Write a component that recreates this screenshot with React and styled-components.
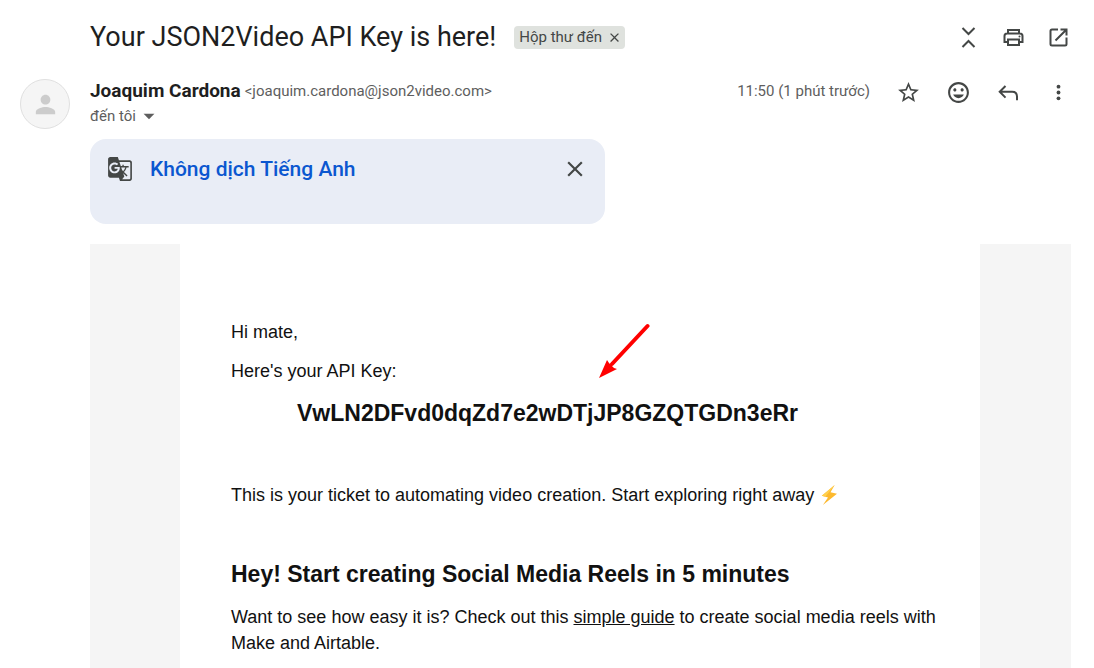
import React from 'react'
import styled, { createGlobalStyle } from 'styled-components'
import {
  MdArrowDropDown,
  MdClose,
  MdGTranslate,
  MdOutlineMood,
  MdPerson,
  MdStarBorder,
} from 'react-icons/md'

const GlobalStyle = createGlobalStyle`
  * {
    box-sizing: border-box;
  }

  body {
    margin: 0;
    background: #ffffff;
    color: #1f1f1f;
    font-family: Roboto, 'Noto Sans', sans-serif;
  }
`

const Page = styled.main`
  display: flex;
  flex-direction: column;
  min-height: 100vh;
  padding: 16px 23px 0 20px;
`

const SubjectRow = styled.header`
  display: flex;
  align-items: center;
  height: 42px;
  padding-left: 70px;
`

const Subject = styled.h1`
  margin: 0;
  font-size: 27px;
  font-weight: 400;
  line-height: 36px;
`

const Label = styled.span`
  display: flex;
  align-items: center;
  gap: 5px;
  height: 23px;
  margin-left: 18px;
  padding: 0 3px 0 5px;
  border-radius: 4px;
  background: #dfe2de;
  color: #444746;
  font-size: 15px;
  line-height: 23px;
`

const Toolbar = styled.div`
  display: flex;
  gap: ${({ $gap }) => $gap}px;
`

const SubjectTools = styled(Toolbar)`
  margin-left: auto;
`

const IconButton = styled.button`
  display: flex;
  align-items: center;
  justify-content: center;
  width: ${({ $size }) => $size || 25}px;
  height: ${({ $size }) => $size || 25}px;
  padding: 0;
  border: 0;
  background: none;
  color: #444746;
  font-size: ${({ $size }) => $size || 25}px;
  cursor: pointer;
`

const Message = styled.article`
  display: flex;
  flex: 1;
  gap: 20px;
  margin-top: 21px;
`

const Avatar = styled.div`
  display: flex;
  flex: none;
  align-items: center;
  justify-content: center;
  width: 50px;
  height: 50px;
  border: 1px solid #e0e0e0;
  border-radius: 50%;
  background: #f5f5f5;
  color: #cccccc;
  font-size: 29px;
`

const Column = styled.div`
  display: flex;
  flex: 1;
  flex-direction: column;
  min-width: 0;
`

const SenderRow = styled.div`
  display: flex;
  align-items: flex-start;
  height: 24px;
  line-height: 24px;
`

const SenderName = styled.h2`
  margin: 0 4px 0 0;
  font-size: 19px;
  font-weight: 700;
`

const Address = styled.span`
  color: #5e5e5e;
  font-size: 15px;
`

const Time = styled.time`
  margin-left: auto;
  margin-right: 26px;
  color: #5e5e5e;
  font-size: 15px;
`

const MessageTools = styled(Toolbar)`
  margin-top: 1px;
`

const RecipientButton = styled.button`
  display: flex;
  align-items: center;
  align-self: flex-start;
  height: 25px;
  padding: 0;
  border: 0;
  background: none;
  color: #5e5e5e;
  font-family: inherit;
  font-size: 15px;
  cursor: pointer;

  svg {
    font-size: 26px;
  }
`

const TranslateBar = styled.section`
  display: flex;
  align-items: flex-start;
  width: 515px;
  max-width: 100%;
  height: 85px;
  margin-top: 11px;
  padding: 17px 17px 0;
  border-radius: 16px;
  background: #e9edf6;
  color: #444746;
`

const TranslateLink = styled.a`
  margin: 0 auto 0 17px;
  color: #0b57d0;
  font-size: 21px;
  font-weight: 500;
  line-height: 26px;
  text-decoration: none;
`

const MailBody = styled.div`
  flex: 1;
  margin-top: 20px;
  padding: 0 91px 0 90px;
  background: #f5f5f5;
`

const Sheet = styled.div`
  height: 100%;
  padding: 75px 40px 12px 51px;
  background: #ffffff;
  color: #111111;
  font-family: 'Liberation Sans', Arial, sans-serif;
`

const Paragraph = styled.p`
  margin: 0 0 13px;
  font-size: 18px;
  line-height: 26px;

  a {
    color: inherit;
  }
`

const ApiKey = styled.p`
  position: relative;
  width: fit-content;
  margin: 0 0 53px 66px;
  font-size: 23px;
  font-weight: 700;
  line-height: 32px;
`

const Arrow = styled.svg`
  position: absolute;
  left: 301px;
  bottom: 50px;
  width: 52px;
  height: 56px;
`

const Heading = styled.h3`
  margin: 50px 0 14px;
  font-size: 23px;
  font-weight: 700;
  line-height: 32px;
`

const BoltIcon = styled.svg`
  width: 20px;
  height: 22px;
  vertical-align: -5px;
`

const LineIcon = styled.svg.attrs({ viewBox: '0 0 25 25', fill: 'none', stroke: 'currentColor' })`
  width: 25px;
  height: 25px;
  stroke-width: ${({ $weight }) => $weight || 2}px;
`

const CollapseIcon = () => (
  <LineIcon>
    <path d="m6.500 3 6 6 6-6M6.500 22l6-6 6 6" />
  </LineIcon>
)

const PrintIcon = () => (
  <LineIcon $weight={2}>
    <path d="M7 8.500V5h11v3.500M7 17H3.500v-6q0-2.500 2.500-2.500h13q2.500 0 2.500 2.500v6H18" />
    <path d="M7 14.500h11V20H7z" />
    <circle cx="18.500" cy="11.500" r="1" fill="currentColor" stroke="none" />
  </LineIcon>
)

const OpenIcon = () => (
  <LineIcon>
    <path d="M12 4.500H6q-1.500 0-1.500 1.500v13q0 1.500 1.500 1.500h13q1.500 0 1.500-1.500v-6.500" />
    <path d="M14.500 4.500h6v6M20.500 4.500 9.500 15.500" />
  </LineIcon>
)

const ReplyIcon = () => (
  <LineIcon>
    <path d="M9.500 6 3.700 11.800l5.800 5.800M4 11.800h12.200q4.800 0 4.800 4.800v3.700" />
  </LineIcon>
)

const MoreIcon = () => (
  <LineIcon>
    <g fill="currentColor" stroke="none">
      <circle cx="12.500" cy="6.700" r="1.900" />
      <circle cx="12.500" cy="12.500" r="1.900" />
      <circle cx="12.500" cy="18.300" r="1.900" />
    </g>
  </LineIcon>
)

const Bolt = () => (
  <BoltIcon viewBox="0 0 20 22" role="img" aria-label="⚡">
    <path d="M15.700 1 2.800 11.700l6.200 1.700L3.900 21 18 9.800l-6.500-1.600z" fill="#fdb92e" />
    <path d="M15.700 1 2.800 11.700l3.500 1z" fill="#ffd04d" />
  </BoltIcon>
)

const App = () => (
  <>
    <GlobalStyle />
    <Page>
      <SubjectRow>
        <Subject>Your JSON2Video API Key is here!</Subject>
        <Label>
          Hộp thư đến
          <IconButton $size={15} aria-label="Xóa nhãn"><MdClose /></IconButton>
        </Label>
        <SubjectTools $gap={20}>
          <IconButton aria-label="Thu gọn"><CollapseIcon /></IconButton>
          <IconButton aria-label="In"><PrintIcon /></IconButton>
          <IconButton aria-label="Mở trong cửa sổ mới"><OpenIcon /></IconButton>
        </SubjectTools>
      </SubjectRow>

      <Message>
        <Avatar><MdPerson /></Avatar>
        <Column>
          <SenderRow>
            <SenderName>Joaquim Cardona</SenderName>
            <Address>&lt;joaquim.cardona@json2video.com&gt;</Address>
            <Time>11:50 (1 phút trước)</Time>
            <MessageTools $gap={25}>
              <IconButton aria-label="Gắn dấu sao"><MdStarBorder /></IconButton>
              <IconButton aria-label="Thêm biểu tượng cảm xúc"><MdOutlineMood /></IconButton>
              <IconButton aria-label="Trả lời"><ReplyIcon /></IconButton>
              <IconButton aria-label="Thêm"><MoreIcon /></IconButton>
            </MessageTools>
          </SenderRow>
          <RecipientButton>
            đến tôi
            <MdArrowDropDown />
          </RecipientButton>

          <TranslateBar>
            <MdGTranslate size={26} />
            <TranslateLink href="#translate">Không dịch Tiếng Anh</TranslateLink>
            <IconButton $size={26} aria-label="Đóng"><MdClose /></IconButton>
          </TranslateBar>

          <MailBody>
            <Sheet>
              <Paragraph>Hi mate,</Paragraph>
              <Paragraph>Here's your API Key:</Paragraph>
              <ApiKey>
                VwLN2DFvd0dqZd7e2wDTjJP8GZQTGDn3eRr
                <Arrow viewBox="0 0 52 56" aria-hidden="true">
                  <path d="M49.500 3 14 41" stroke="#ff0000" strokeWidth="4" strokeLinecap="round" />
                  <path d="M1 55 9 37l2 3 5 5 3 1z" fill="#ff0000" />
                </Arrow>
              </ApiKey>
              <Paragraph>
                This is your ticket to automating video creation. Start exploring right away <Bolt />
              </Paragraph>
              <Heading>Hey! Start creating Social Media Reels in 5 minutes</Heading>
              <Paragraph>
                Want to see how easy it is? Check out this <a href="#guide">simple guide</a> to create
                social media reels with Make and Airtable.
              </Paragraph>
            </Sheet>
          </MailBody>
        </Column>
      </Message>
    </Page>
  </>
)

export default App
